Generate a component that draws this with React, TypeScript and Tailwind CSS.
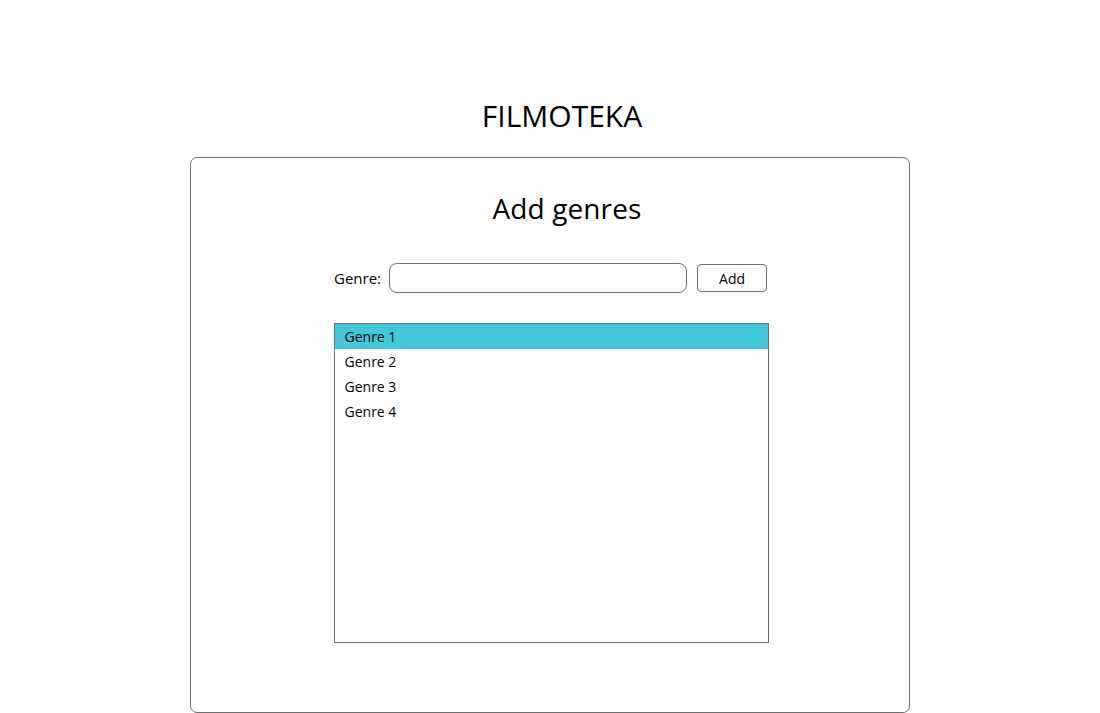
const genres = ["Genre 1", "Genre 2", "Genre 3", "Genre 4"];

const App = () => {
  return (
    <div className="min-h-[713px] w-full bg-white text-black font-['Open_Sans',sans-serif]">
      <div className="flex flex-col items-center pt-[92px]">
        <h1 className="text-[30px] leading-[48px] pl-[24px] tracking-[0px]">FILMOTEKA</h1>
        <div className="mt-[17px] w-[720px] h-[556px] border border-[#707070] rounded-[7px] flex flex-col items-center">
          <h2 className="mt-[30px] text-[28px] leading-[40px] pl-[34px] tracking-[0.1px]">Add genres</h2>
          <div className="mt-[35px] flex items-center w-[434px] ml-[2px]">
            <label className="text-[15px] mr-[8px]">Genre:</label>
            <input
              type="text"
              className="w-[298px] h-[30px] border border-[#707070] rounded-[8px] outline-none px-2"
            />
            <button className="ml-[10px] w-[70px] h-[28px] border border-[#707070] rounded-[4px] text-[14px]">
              Add
            </button>
          </div>
          <ul className="mt-[30px] w-[435px] h-[320px] border border-[#707070] ml-[2px]">
            {genres.map((g, i) => (
              <li
                key={g}
                className={
                  "h-[25px] pl-[10px] text-[14px] leading-[25px] " +
                  (i === 0 ? "bg-[#40c8dc]" : "")
                }
              >
                {g}
              </li>
            ))}
          </ul>
        </div>
      </div>
    </div>
  );
};

export default App;
